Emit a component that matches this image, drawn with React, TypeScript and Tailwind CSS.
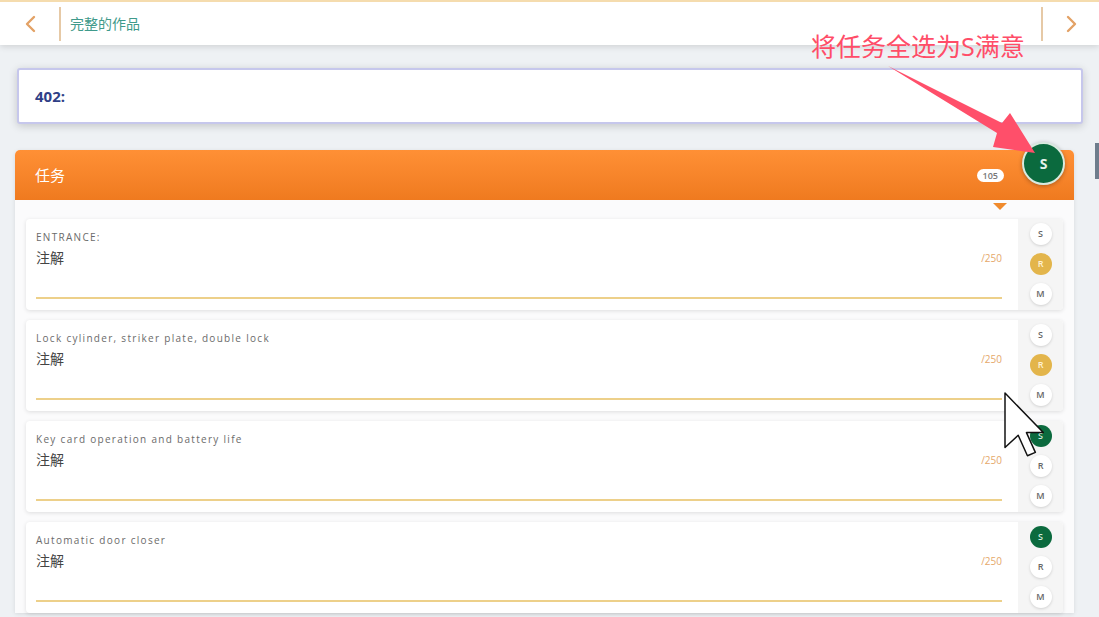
import React from "react";

const tasks = [
  { label: "ENTRANCE:", pick: "R" },
  { label: "Lock cylinder, striker plate, double lock", pick: "R" },
  { label: "Key card operation and battery life", pick: "S" },
  { label: "Automatic door closer", pick: "S" },
];

function Chevron({ dir }: { dir: "left" | "right" }) {
  return (
    <svg width="14" height="20" viewBox="0 0 14 20" fill="none">
      <path
        d={dir === "left" ? "M10 3 L3 10 L10 17" : "M4 3 L11 10 L4 17"}
        stroke="#e3a266"
        strokeWidth="2.4"
        strokeLinecap="round"
        strokeLinejoin="round"
      />
    </svg>
  );
}

function Choice({ letter, active }: { letter: string; active: boolean }) {
  const tone = active
    ? letter === "S"
      ? "bg-[#0b6a3e] text-[#d6eadf]"
      : "bg-[#e3b54b] text-[#fff3d6]"
    : "bg-white text-[#666] shadow-[0_1px_3px_rgba(0,0,0,0.15)]";
  return (
    <div
      className={`flex h-[22px] w-[22px] items-center justify-center rounded-full text-[9px] font-semibold ${tone}`}
    >
      {letter}
    </div>
  );
}

function TaskRow({ label, pick }: { label: string; pick: string }) {
  return (
    <div className="flex h-[91px] rounded-[4px] bg-white shadow-[0_1px_4px_rgba(0,0,0,0.12)]">
      <div className="flex flex-1 flex-col pl-[10px] pr-[16px]">
        <div className="mt-[13px] h-[10px] text-[10px] leading-[10px] tracking-[1.3px] text-[#6b6b6b]">
          {label}
        </div>
        <div className="mt-[8px] flex items-center justify-between">
          <span className="text-[14px] leading-[16px] text-[#444]">注解</span>
          <span className="text-[10px] text-[#e5a86a]">/250</span>
        </div>
        <div className="mt-[31px] h-[2px] bg-[#edd08a]" />
      </div>
      <div className="flex w-[45px] flex-col items-center gap-[8px] rounded-r-[4px] bg-[#f5f5f5] pt-[4px]">
        {["S", "R", "M"].map((l) => (
          <Choice key={l} letter={l} active={l === pick} />
        ))}
      </div>
    </div>
  );
}

export default function App() {
  return (
    <div
      className="relative h-[617px] w-[1099px] overflow-hidden bg-[#eef1f4]"
      style={{ fontFamily: "'Open Sans', 'Noto Sans CJK SC', sans-serif" }}
    >
      {/* top bar */}
      <div className="relative z-10 flex h-[45px] items-center border-t-2 border-[#f5dcae] bg-white shadow-[0_2px_6px_rgba(0,0,0,0.12)]">
        <div className="flex w-[59px] justify-center pl-[2px]">
          <Chevron dir="left" />
        </div>
        <div className="h-[34px] w-[2px] bg-[#e6c9a6]" />
        <div className="flex-1 pl-[9px] text-[14px] text-[#3f9a8b]">完整的作品</div>
        <div className="h-[34px] w-[2px] bg-[#e6c9a6]" />
        <div className="flex w-[56px] justify-center">
          <Chevron dir="right" />
        </div>
      </div>

      {/* code field */}
      <div className="ml-[17px] mr-[16px] mt-[23px] flex h-[56px] items-center rounded-[3px] border-2 border-[#c6c7ec] bg-white pl-[16px] shadow-[0_2px_8px_rgba(0,0,0,0.18)]">
        <span className="text-[15px] font-bold leading-[18px] text-[#2f3f87]">402:</span>
      </div>

      {/* task card */}
      <div className="ml-[15px] mr-[25px] mt-[26px] rounded-t-[5px] bg-[#fbfbfc] shadow-[0_1px_4px_rgba(0,0,0,0.1)]">
        <div className="flex h-[50px] items-center rounded-t-[5px] bg-gradient-to-b from-[#ff9035] to-[#ef7a1f] pl-[20px] pr-[70px]">
          <span className="flex-1 text-[15px] text-white">任务</span>
          <span className="rounded-full bg-white px-[6px] text-[9px] font-semibold leading-[13px] text-[#777]">
            105
          </span>
        </div>
        <div className="flex justify-end pr-[67px] pt-[3px]">
          <div className="h-0 w-0 border-x-[7px] border-t-[7px] border-x-transparent border-t-[#f08a2c]" />
        </div>
        <div className="flex flex-col gap-[10px] px-[11px] pt-[9px]">
          {tasks.map((t) => (
            <TaskRow key={t.label} label={t.label} pick={t.pick} />
          ))}
        </div>
      </div>

      {/* select all S */}
      <div className="absolute left-[1022px] top-[142px] flex h-[43px] w-[43px] items-center justify-center rounded-full border-2 border-[#d9eadf] bg-[#0b6a3e] text-[14px] font-bold text-[#e6f2ea] shadow-[0_1px_4px_rgba(0,0,0,0.3)]">
        S
      </div>

      {/* scrollbar thumb */}
      <div className="absolute left-[1095px] top-[143px] h-[36px] w-[4px] bg-[#6e7d8c]" />

      {/* annotation */}
      <div className="absolute left-[811px] top-[31px] z-20 text-[25px] leading-[30px] text-[#ff4d68]">
        将任务全选为S满意
      </div>
      <svg className="absolute left-0 top-0 z-20" width="1099" height="617" viewBox="0 0 1099 617" fill="none">
        <polygon
          points="888,66 1002,123 1010,113 1035,153 993,147 997,133"
          fill="#ff4f6a"
        />
        <polygon
          transform="translate(1005 393) scale(3.3)"
          points="0,0 0,16.5 4,12.8 6.8,19 9.2,18 6.5,12 11.6,12"
          fill="#ffffff"
          stroke="#111"
          strokeWidth="0.45"
          strokeLinejoin="round"
        />
      </svg>
    </div>
  );
}
